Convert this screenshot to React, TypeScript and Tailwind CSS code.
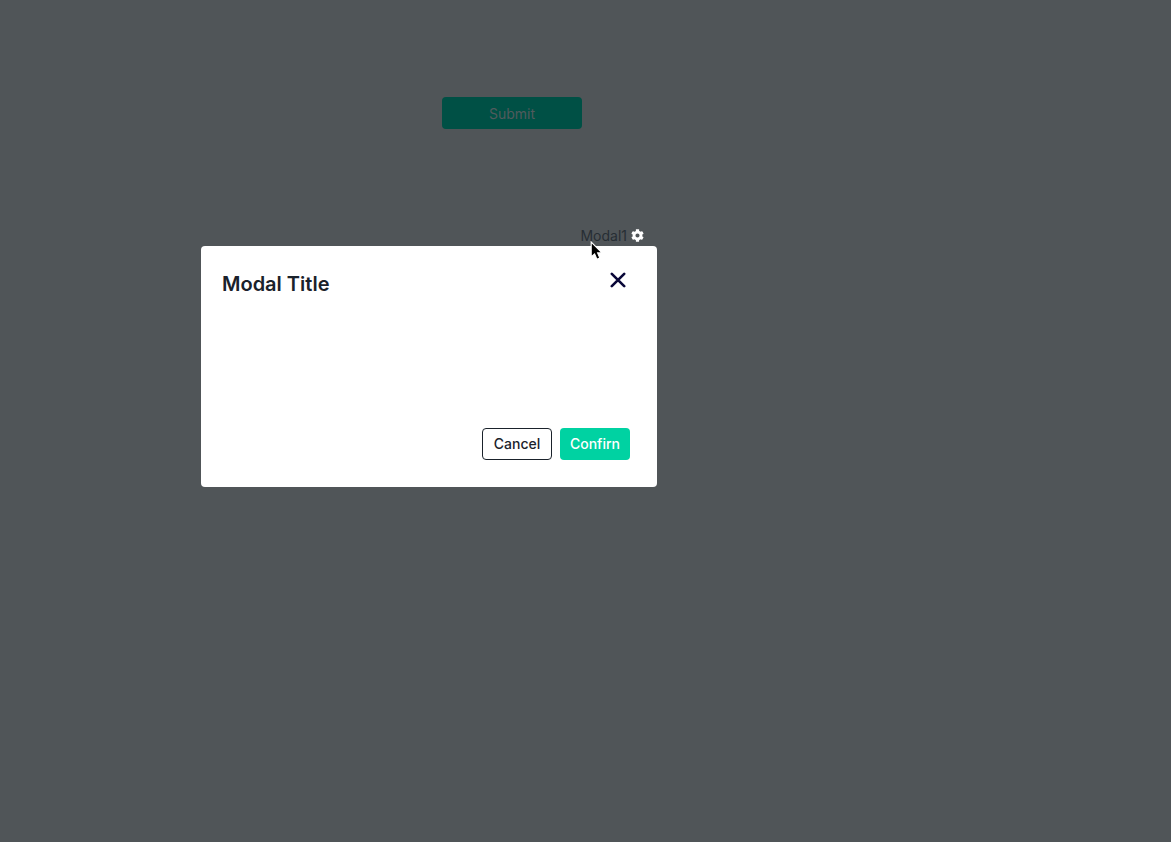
import { FaCog } from "react-icons/fa";

function CloseIcon() {
  return (
    <svg viewBox="0 0 16 16" className="size-4" fill="none" stroke="#090738" strokeWidth="2.6" aria-hidden="true">
      <path d="M1.8 1.8 14.2 14.2M14.2 1.8 1.8 14.2" strokeLinecap="round" />
    </svg>
  );
}

function Pointer() {
  return (
    <svg
      viewBox="0 0 14 20"
      className="pointer-events-none absolute top-[-5px] right-[53px] h-5 w-[14px]"
      aria-hidden="true"
    >
      <path
        d="M1.2 1V15.8L4.6 12.9L6.9 18.3L9.8 17.1L7.6 11.9H12Z"
        fill="#000"
        stroke="#fff"
        strokeWidth="1.1"
      />
    </svg>
  );
}

export default function App() {
  return (
    <main className="min-h-screen bg-[#505558] pt-[97px] font-[Inter,sans-serif] text-sm text-[#1a222b]">
      <button className="ml-[442px] block h-8 w-[140px] rounded bg-[#005045] pt-px text-[#505b5d]">
        Submit
      </button>

      <div className="mt-24 ml-[201px] w-[456px]">
        <div className="flex h-[21px] items-center justify-end gap-1 pr-[13px]">
          <span className="text-[#272e34]">Modal1</span>
          <button aria-label="Modal settings" className="text-white">
            <FaCog className="size-[13px]" />
          </button>
        </div>

        <section
          role="dialog"
          aria-labelledby="modal-title"
          className="relative flex h-[241px] flex-col justify-between rounded bg-white pt-6 pr-[27px] pb-[27px] pl-[21px]"
        >
          <Pointer />
          <header className="flex items-start justify-between">
            <h1 id="modal-title" className="text-xl leading-7 font-semibold">
              Modal Title
            </h1>
            <button aria-label="Close" className="px-1 pt-0.5 pb-1">
              <CloseIcon />
            </button>
          </header>
          <footer className="flex justify-end gap-2 font-medium">
            <button className="h-8 w-[70px] rounded border border-[#1a222b]">Cancel</button>
            <button className="h-8 w-[70px] rounded bg-[#00d2a2] text-white">Confirn</button>
          </footer>
        </section>
      </div>
    </main>
  );
}
